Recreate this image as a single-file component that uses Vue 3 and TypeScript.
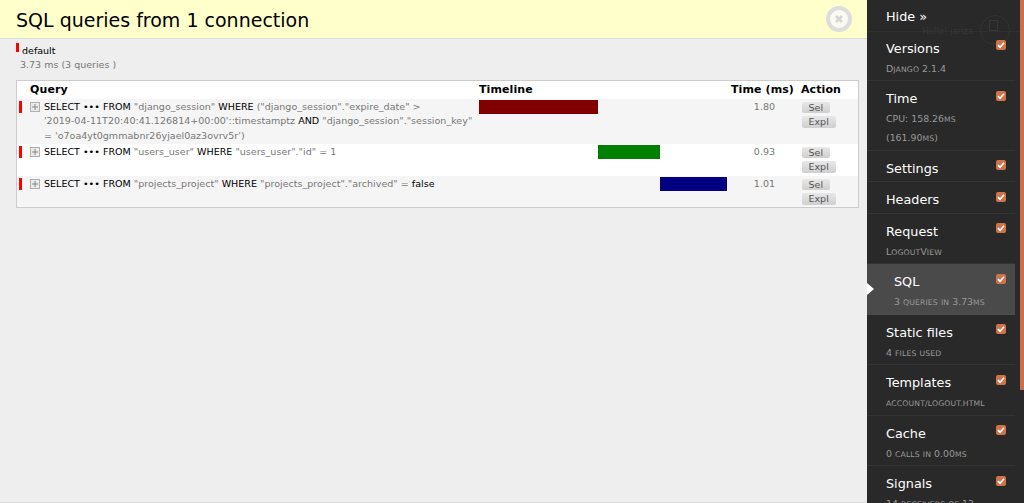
<script setup lang="ts">
interface Token { t: string; k?: boolean; nb?: boolean }
interface Row { tokens: Token[]; time: string; left: number; width: number; color: string; h: number }
interface Panel { title: string; sub?: string[]; active?: boolean }
interface Seg { t: string; small: boolean }

const rows: Row[] = [
  {
    tokens: [
      { t: 'SELECT ••• FROM', k: true }, { t: ' "django_session" ' }, { t: 'WHERE', k: true },
      { t: ' ("django_session"."expire_date" > ' },
      { t: '\'2019-04-11T20:40:41.126814+00:00\'::timestamptz', nb: true }, { t: ' ' },
      { t: 'AND', k: true }, { t: ' "django_session"."session_key" = \'o7oa4yt0gmmabnr26yjael0az3ovrv5r\')' }
    ],
    time: '1.80', left: 0, width: 119, color: '#800000', h: 45.4
  },
  {
    tokens: [
      { t: 'SELECT ••• FROM', k: true }, { t: ' "users_user" ' }, { t: 'WHERE', k: true },
      { t: ' "users_user"."id" = 1' }
    ],
    time: '0.93', left: 119, width: 62, color: '#008000', h: 32
  },
  {
    tokens: [
      { t: 'SELECT ••• FROM', k: true }, { t: ' "projects_project" ' }, { t: 'WHERE', k: true },
      { t: ' "projects_project"."archived" = ' }, { t: 'false', k: true }
    ],
    time: '1.01', left: 181, width: 67, color: '#000080', h: 31
  }
]

const panels: Panel[] = [
  { title: 'Versions', sub: ['Django 2.1.4'] },
  { title: 'Time', sub: ['CPU: 158.26ms', '(161.90ms)'] },
  { title: 'Settings' },
  { title: 'Headers' },
  { title: 'Request', sub: ['LogoutView'] },
  { title: 'SQL', sub: ['3 queries in 3.73ms'], active: true },
  { title: 'Static files', sub: ['4 files used'] },
  { title: 'Templates', sub: ['account/logout.html'] },
  { title: 'Cache', sub: ['0 calls in 0.00ms'] },
  { title: 'Signals', sub: ['14 receivers of 12'] }
]

function segs(s: string): Seg[] {
  return s.split(/([a-z\/.]*[a-z][a-z\/.]*)/).filter(Boolean).map((t) => ({ t, small: /[a-z]/.test(t) }))
}
</script>

<template>
  <div class="page">
    <main class="content">
      <header class="head">
        <h3>SQL queries from 1 connection</h3>
        <span class="close" aria-label="Close">
          <svg width="12" height="12" viewBox="0 0 12 12"><path d="M3 3l6 6M9 3l-6 6" stroke="#d5d5d5" stroke-width="2.6" fill="none" /></svg>
        </span>
      </header>
      <section class="conn">
        <div class="alias"><i class="mark"></i><span>default</span></div>
        <div class="stat">3.73 ms (3 queries )</div>
      </section>
      <div class="tablewrap">
        <div class="row th">
          <div class="c-color"></div>
          <div class="c-query">Query</div>
          <div class="c-line">Timeline</div>
          <div class="c-time">Time (ms)</div>
          <div class="c-act">Action</div>
        </div>
        <div v-for="(r, i) in rows" :key="i" class="row" :class="{ odd: i % 2 === 0 }" :style="{ height: r.h + 'px' }">
          <div class="c-color"><i class="rowmark"></i></div>
          <div class="c-query q">
            <span class="toggle">
              <svg width="10" height="10" viewBox="0 0 10 10"><rect x=".5" y=".5" width="9" height="9" fill="#eaeaea" stroke="#b0b0b0" /><path d="M2 5h6M5 2v6" stroke="#888" fill="none" /></svg>
            </span>
            <div class="sql"><span v-for="(tk, j) in r.tokens" :key="j" :class="[tk.k ? 'kw' : 'str', { nb: tk.nb }]">{{ tk.t }}</span></div>
          </div>
          <div class="c-line"><div class="bar" :style="{ marginLeft: r.left + 'px', width: r.width + 'px', background: r.color }"></div></div>
          <div class="c-time num">{{ r.time }}</div>
          <div class="c-act btns"><span class="btn">Sel</span><span class="btn">Expl</span></div>
        </div>
      </div>
    </main>

    <aside class="side">
      <div class="ghost" aria-hidden="true">
        <span class="ghost-t">Hello! jariza</span>
        <i class="ghost-c"><i class="ghost-i"></i></i>
      </div>
      <div class="hide">Hide »</div>
      <ul class="list">
        <li v-for="p in panels" :key="p.title" class="item" :class="{ active: p.active }">
          <span v-if="p.active" class="arrow"></span>
          <span class="check">
            <svg width="8" height="8" viewBox="0 0 8 8"><path d="M1 4.2l2.1 2.1L7 1.8" stroke="#fff" stroke-width="1.7" fill="none" /></svg>
          </span>
          <div class="title">{{ p.title }}</div>
          <div v-for="s in p.sub" :key="s" class="sub"><span v-for="(g, k) in segs(s)" :key="k" :class="{ sc: g.small }">{{ g.t }}</span></div>
        </li>
      </ul>
    </aside>
    <div class="scroll"><div class="thumb"></div></div>
  </div>
</template>

<style>
html, body { margin: 0; height: 100%; overflow: hidden; background: #eee; }
</style>

<style scoped>
.page {
  display: flex; width: 1024px; height: 503px; overflow: hidden; position: relative;
  font-family: "DejaVu Sans", sans-serif; font-size: 9.5px; color: #000; background: #eee;
}
.content { width: 866.5px; flex: none; border-bottom: 1px solid #ddd; box-sizing: border-box; }
.head {
  height: 39px; box-sizing: border-box; background: #ffc; border-bottom: 1px solid #ddd;
  display: flex; align-items: center; justify-content: space-between; padding: 0 15px 0 16px;
}
h3 { margin: 0; font-size: 19px; font-weight: 400; line-height: 41px; height: 38px; }
.close {
  width: 26px; height: 26px; box-sizing: border-box; border: 4px solid #ddd; border-radius: 50%;
  background: #fafaf2; display: flex; align-items: center; justify-content: center;
}
.conn { padding: 4px 16px 0; height: 41px; box-sizing: border-box; }
.alias { display: flex; align-items: flex-start; height: 15px; line-height: 15.5px; }
.alias span { color: #000; margin-left: 3px; }
.mark { width: 3px; height: 9px; background: #f00; display: block; }
.stat { color: #777; line-height: 14px; margin-left: 4px; }
.tablewrap {
  margin-left: 16px; width: 843px; box-sizing: border-box; border: 1px solid #ccc; background: #fff;
}
.row { display: flex; align-items: flex-start; }
.row.odd { background: #f5f5f5; }
.th { height: 17.6px; line-height: 17px; font-weight: 700; font-size: 11px; background: #fff; letter-spacing: .1px; }
.c-color { width: 13px; flex: none; }
.c-query { width: 449px; flex: none; }
.c-line { width: 252px; flex: none; }
.c-time { width: 70px; flex: none; white-space: nowrap; }
.c-act { flex: 1; }
.rowmark { display: block; width: 3px; height: 12px; background: #f00; margin: 2px 0 0 2px; }
.q { display: flex; gap: 4px; }
.toggle { flex: none; width: 10px; height: 10px; margin-top: 3px; display: block; }
.toggle svg { display: block; }
.sql { line-height: 14.4px; padding-top: 1.2px; width: 432px; font-size: 9.55px; }
.kw { color: #000; }
.str { color: #777; }
.nb { white-space: nowrap; }
.bar { height: 14.5px; margin-top: 1px; }
.num { color: #777; line-height: 14px; padding: 1px 26px 0 0; box-sizing: border-box; text-align: right; }
.btns { display: flex; flex-direction: column; align-items: flex-start; gap: 3px; padding: 3px 0 0 .5px; }
.btn {
  display: block; box-sizing: border-box; height: 11.5px; line-height: 11px; padding: 0 7px; font-size: 9.5px; color: #555;
  background: linear-gradient(#e8e8e8, #cfcfcf); border-radius: 2px;
}
.side {
  width: 153.5px; flex: none; background: #292929; color: #fff; position: relative; overflow: hidden; height: 503px;
}
.ghost { position: absolute; left: 0; right: 0; top: 31px; height: 1px; background: #2f2f2f; }
.ghost-t { position: absolute; left: 56px; top: -6px; font-size: 8.5px; color: #373737; white-space: nowrap; line-height: 12px; }
.ghost-c { position: absolute; left: 113px; top: -16px; width: 30px; height: 30px; box-sizing: border-box; border-radius: 50%; border: 1px solid #333; }
.ghost-i { position: absolute; left: 8px; top: 4px; width: 9px; height: 11px; border: 1px solid #363636; box-sizing: border-box; }
.hide { height: 30.8px; line-height: 34px; padding-left: 19.5px; font-size: 12.8px; position: relative; }
.list { list-style: none; margin: 0; padding: 0; position: relative; width: 148.5px; }
.item {
  position: relative; padding: 8px 0 2.5px 19.5px; border-bottom: 1px solid #333;
}
.item.active { background: #4a4a4a; padding-left: 27.5px; border-bottom-color: #4a4a4a; }
.title { font-size: 12.8px; line-height: 20px; color: #fff; }
.sub { font-size: 9.4px; color: #999; line-height: 19px; white-space: nowrap; }
.sc { font-size: 7.7px; line-height: 1; text-transform: uppercase; letter-spacing: .15px; }
.check {
  position: absolute; right: 9px; top: 9.5px; width: 10px; height: 10px; border-radius: 2px; background: #d0734a;
  display: flex; align-items: center; justify-content: center;
}
.arrow {
  position: absolute; left: 0; top: 19px; width: 0; height: 0;
  border-left: 7px solid #fff; border-top: 6px solid transparent; border-bottom: 6px solid transparent;
}
.scroll { width: 4px; flex: none; background: #292929; }
.thumb { height: 390px; background: #c96f4b; }
</style>
